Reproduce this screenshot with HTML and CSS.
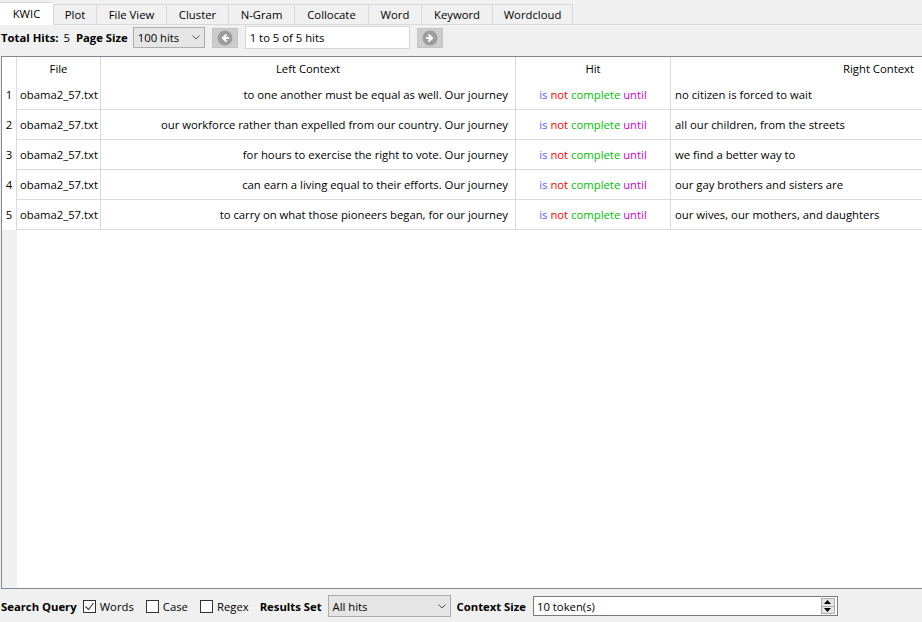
FILE: index.html
```html
<!DOCTYPE html>
<html>
<head>
<meta charset="utf-8">
<link rel="stylesheet" href="styles.css">
</head>
<body>
<div class="tabs">
  <div class="tab active">KWIC</div>
  <div class="tab">Plot</div>
  <div class="tab">File View</div>
  <div class="tab">Cluster</div>
  <div class="tab">N-Gram</div>
  <div class="tab">Collocate</div>
  <div class="tab">Word</div>
  <div class="tab">Keyword</div>
  <div class="tab">Wordcloud</div>
</div>
<div class="toolbar">
  <span class="lbl">Total Hits:</span>
  <span class="val">5</span>
  <span class="lbl lbl-page">Page Size</span>
  <div class="combo combo-page"><span>100 hits</span><svg class="chev" width="8" height="5" viewBox="0 0 8 5"><path d="M0.5 0.5 L4 4 L7.5 0.5" fill="none" stroke="#555" stroke-width="1"/></svg></div>
  <button class="nav nav-prev"><svg width="16" height="16" viewBox="0 0 16 16"><circle cx="8" cy="8" r="7.5" fill="#9d9d9d"/><path d="M9.5 4.5 L6 8 L9.5 11.5" fill="none" stroke="#fff" stroke-width="2"/><path d="M6 8 H12" stroke="#fff" stroke-width="2"/></svg></button>
  <div class="field field-hits">1 to 5 of 5 hits</div>
  <button class="nav nav-next"><svg width="16" height="16" viewBox="0 0 16 16"><circle cx="8" cy="8" r="7.5" fill="#9d9d9d"/><path d="M6.5 4.5 L10 8 L6.5 11.5" fill="none" stroke="#fff" stroke-width="2"/><path d="M4 8 H10" stroke="#fff" stroke-width="2"/></svg></button>
</div>
<div class="grid-wrap">
  <div class="grid">
    <div class="hd rh"></div>
    <div class="hd c-file">File</div>
    <div class="hd c-left">Left Context</div>
    <div class="hd c-hit">Hit</div>
    <div class="hd c-right">Right Context</div>

    <div class="rh num">1</div>
    <div class="cell c-file">obama2_57.txt</div>
    <div class="cell c-left">to one another must be equal as well. Our journey</div>
    <div class="cell c-hit"><span class="w1">is</span> <span class="w2">not</span> <span class="w3">complete</span> <span class="w4">until</span></div>
    <div class="cell c-right">no citizen is forced to wait</div>

    <div class="rh num">2</div>
    <div class="cell c-file">obama2_57.txt</div>
    <div class="cell c-left">our workforce rather than expelled from our country. Our journey</div>
    <div class="cell c-hit"><span class="w1">is</span> <span class="w2">not</span> <span class="w3">complete</span> <span class="w4">until</span></div>
    <div class="cell c-right">all our children, from the streets</div>

    <div class="rh num">3</div>
    <div class="cell c-file">obama2_57.txt</div>
    <div class="cell c-left">for hours to exercise the right to vote. Our journey</div>
    <div class="cell c-hit"><span class="w1">is</span> <span class="w2">not</span> <span class="w3">complete</span> <span class="w4">until</span></div>
    <div class="cell c-right">we find a better way to</div>

    <div class="rh num">4</div>
    <div class="cell c-file">obama2_57.txt</div>
    <div class="cell c-left">can earn a living equal to their efforts. Our journey</div>
    <div class="cell c-hit"><span class="w1">is</span> <span class="w2">not</span> <span class="w3">complete</span> <span class="w4">until</span></div>
    <div class="cell c-right">our gay brothers and sisters are</div>

    <div class="rh num">5</div>
    <div class="cell c-file">obama2_57.txt</div>
    <div class="cell c-left">to carry on what those pioneers began, for our journey</div>
    <div class="cell c-hit"><span class="w1">is</span> <span class="w2">not</span> <span class="w3">complete</span> <span class="w4">until</span></div>
    <div class="cell c-right">our wives, our mothers, and daughters</div>
  </div>
</div>
<div class="bottom">
  <span class="lbl">Search Query</span>
  <label class="chk chk-words"><span class="box checked"><svg width="11" height="11" viewBox="0 0 11 11"><path d="M1.5 5.5 L4.5 8.5 L9.5 2" fill="none" stroke="#333" stroke-width="1.1"/></svg></span>Words</label>
  <label class="chk"><span class="box"></span>Case</label>
  <label class="chk"><span class="box"></span>Regex</label>
  <span class="lbl lbl-results">Results Set</span>
  <div class="combo combo-results"><span>All hits</span><svg class="chev" width="8" height="5" viewBox="0 0 8 5"><path d="M0.5 0.5 L4 4 L7.5 0.5" fill="none" stroke="#555" stroke-width="1"/></svg></div>
  <span class="lbl lbl-context">Context Size</span>
  <div class="spinner">
    <span class="spin-text">10 token(s)</span>
    <div class="spin-btns">
      <div class="spin-btn"><svg width="7" height="4" viewBox="0 0 7 4"><path d="M0 4 L3.5 0 L7 4 Z" fill="#000"/></svg></div>
      <div class="spin-btn"><svg width="7" height="4" viewBox="0 0 7 4"><path d="M0 0 L3.5 4 L7 0 Z" fill="#000"/></svg></div>
    </div>
  </div>
</div>
</body>
</html>
```

FILE: styles.css
```css
* { box-sizing: border-box; }
html, body { margin: 0; padding: 0; }
body {
  width: 922px;
  height: 622px;
  overflow: hidden;
  background: #f0f0f0;
  font-family: "Open Sans", "Noto Sans", sans-serif;
  font-size: 11.3px;
  color: #000;
}

/* tabs */
.tabs {
  display: flex;
  align-items: flex-end;
  height: 25px;
  border-bottom: 1px solid #d9d9d9;
}
.tab {
  height: 20px;
  line-height: 19px;
  text-align: center;
  border: 1px solid #d9d9d9;
  border-bottom: none;
  border-right: none;
  background: #f0f0f0;
  color: #000;
  white-space: nowrap;
}
.tab:last-child { border-right: 1px solid #d9d9d9; }
.tab.active {
  height: 23px;
  line-height: 22px;
  margin-bottom: -1px;
  background: #fff;
  border-left: none;
  position: relative;
}
.tab:nth-child(1) { width: 53px; }
.tab:nth-child(2) { width: 43px; }
.tab:nth-child(3) { width: 70px; }
.tab:nth-child(4) { width: 62px; }
.tab:nth-child(5) { width: 66px; }
.tab:nth-child(6) { width: 74px; }
.tab:nth-child(7) { width: 53px; }
.tab:nth-child(8) { width: 71px; }
.tab:nth-child(9) { width: 81px; }

/* toolbar */
.toolbar {
  height: 31px;
  display: flex;
  align-items: flex-start;
  padding-left: 1px;
  padding-top: 2px;
}
.toolbar > span { line-height: 21px; }
.lbl { font-weight: bold; white-space: nowrap; }
.val { margin-left: 5px; }
.lbl-page { margin-left: 6px; }
.combo {
  display: flex;
  align-items: center;
  justify-content: space-between;
  background: #e5e5e5;
  border: 1px solid #acacac;
  padding: 0 4px 0 4px;
  white-space: nowrap;
}
.combo-page { margin-left: 5px; width: 72px; height: 21px; }
.chev { flex: none; }
.nav {
  margin: 1px 0 0 0;
  padding: 0;
  width: 26px;
  height: 20px;
  background: #cccccc;
  border: 1px solid #c4c4c4;
  display: flex;
  align-items: center;
  justify-content: center;
}
.nav-prev { margin-left: 7px; }
.nav-next { margin-left: 7px; }
.field-hits {
  margin-left: 7px;
  margin-top: -1px;
  width: 165px;
  height: 23px;
  background: #fff;
  border: 1px solid #d7d7d7;
  padding-left: 4px;
  line-height: 21px;
}

/* grid */
.grid-wrap {
  height: 533px;
  margin-left: 1px;
  border: 1px solid #828790;
  border-right: none;
  background: linear-gradient(to right, #f0f0f0 15px, #fff 15px);
  overflow: hidden;
}
.grid {
  display: grid;
  grid-template-columns: 15px 84px 415px 155px 1fr;
  grid-template-rows: 23px repeat(5, 30px);
  background: #fff;
}
.grid > div {
  border-right: 1px solid #dadada;
  white-space: nowrap;
  overflow: hidden;
}
.grid > .c-right { border-right: none; }
.hd { line-height: 23px; text-align: center; }
.cell { border-bottom: 1px solid #dadada; line-height: 30px; }
.rh { background: #fff; text-align: center; }
.num { line-height: 30px; }
.c-file.cell { padding-left: 3px; }
.c-left.cell { text-align: right; padding-right: 7px; }
.c-hit { text-align: center; }
.c-right.cell { padding-left: 4px; }
.c-right.hd { text-align: right; padding-right: 8px; }
.w1 { color: #5a5aff; }
.w2 { color: #ff0000; }
.w3 { color: #00c000; }
.w4 { color: #cc00cc; }

/* bottom bar */
.bottom {
  height: 33px;
  display: flex;
  align-items: center;
  padding-left: 1px;
  padding-top: 1px;
}
.chk {
  display: flex;
  align-items: center;
  margin-left: 6px;
  white-space: nowrap;
}
.chk + .chk { margin-left: 12px; }
.box {
  width: 13px;
  height: 13px;
  border: 1px solid #333;
  background: #fff;
  margin-right: 4px;
  display: flex;
  align-items: center;
  justify-content: center;
}
.lbl-results { margin-left: 11px; }
.combo-results { margin-left: 6px; width: 123px; height: 22px; }
.lbl-context { margin-left: 6px; }
.spinner {
  margin-left: 7px;
  width: 305px;
  height: 20px;
  background: #fff;
  border: 1px solid #7a7a7a;
  display: flex;
  align-items: center;
  justify-content: space-between;
  padding-left: 3px;
  padding-right: 2px;
  white-space: nowrap;
}
.spin-btns {
  display: flex;
  flex-direction: column;
  width: 14px;
  height: 16px;
  border: 1px solid #adadad;
}
.spin-btn {
  flex: 1;
  background: #e5e5e5;
  display: flex;
  align-items: center;
  justify-content: center;
}
.spin-btn + .spin-btn { border-top: 1px solid #adadad; }
```
